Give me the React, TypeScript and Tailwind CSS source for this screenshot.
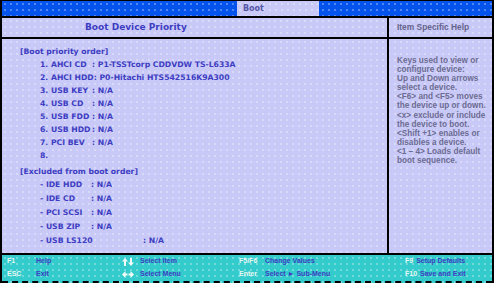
import React from 'react'

const dots =
  'bg-[image:radial-gradient(circle,#ffffffa0_0.5px,transparent_0.9px)] bg-[length:6px_6px]'

const bootOrder: [string, string][] = [
  ['1. AHCI CD', 'P1-TSSTcorp CDDVDW TS-L633A'],
  ['2. AHCI HDD', 'P0-Hitachi HTS542516K9A300'],
  ['3. USB KEY', 'N/A'],
  ['4. USB CD', 'N/A'],
  ['5. USB FDD', 'N/A'],
  ['6. USB HDD', 'N/A'],
  ['7. PCI BEV', 'N/A'],
]

const excluded: string[] = ['IDE HDD', 'IDE CD', 'PCI SCSI', 'USB ZIP']

const helpLines = [
  'Keys used to view or',
  'configure device:',
  'Up and Down arrows',
  'select a device.',
  '<F6> and <F5> moves',
  'the device up or down.',
  '<x> exclude or include',
  'the device to boot.',
  '<Shift +1> enables or',
  'disables a device.',
  '<1 – 4> Loads default',
  'boot sequence.',
]

const Key: React.FC<{ children: React.ReactNode; className?: string }> = ({ children, className = '' }) => (
  <span className={`text-[#eaf7f3] ${className}`}>{children}</span>
)

const Desc: React.FC<{ children: React.ReactNode; className?: string }> = ({ children, className = '' }) => (
  <span className={`text-[#3f3fc4] ${className}`}>{children}</span>
)

// white up/down and left/right arrows used in the legend
const UpDown = () => (
  <svg width="12" height="8" viewBox="0 0 12 8" fill="#f2fbf8">
    <path d="M3 0 L6 3.5 H4 V8 H2 V3.5 H0 Z" />
    <path d="M9 8 L12 4.5 H10 V0 H8 V4.5 H6 Z" />
  </svg>
)

const LeftRight = () => (
  <svg width="12" height="7" viewBox="0 0 12 7" fill="#f2fbf8">
    <path d="M0 3.5 L3.5 0 V2.5 H5.5 V4.5 H3.5 V7 Z" />
    <path d="M12 3.5 L8.5 0 V2.5 H6.5 V4.5 H8.5 V7 Z" />
  </svg>
)

export default function App() {
  return (
    <div className="w-[497px] h-[288px] bg-white overflow-hidden font-['DejaVu_Sans',sans-serif]">
      <div className="w-[494px] flex flex-col border-t border-x-2 border-black">
        {/* menu bar */}
        <div className={`h-[17px] flex border-b-2 border-black bg-[#0453ec] ${dots}`}>
          <div
            className={`ml-[235px] w-[82px] bg-[#c9c9f7] ${dots} pl-[6px] flex items-center text-[8px] font-bold text-[#5656a6]`}
          >
            Boot
          </div>
        </div>

        {/* header row */}
        <div className={`h-[21px] flex border-b-2 border-black bg-[#c9c9f7] ${dots}`}>
          <div className="w-[387px] border-r-2 border-black flex items-center pl-[83px] text-[9px] font-bold text-[#3d3dc2]">
            Boot Device Priority
          </div>
          <div className="flex-1 flex items-center pl-[8px] font-['Liberation_Sans',sans-serif] text-[8.4px] font-bold text-[#64648c]">
            Item Specific Help
          </div>
        </div>

        {/* content */}
        <div className={`h-[216px] flex border-b-2 border-black bg-[#c9c9f7] ${dots}`}>
          <div className="w-[387px] border-r-2 border-black pl-[18px] pt-[7px] text-[7.7px] font-bold text-[#3d3dc2] whitespace-nowrap">
            <div className="h-[12px] leading-[12px]">[Boot priority order]</div>
            <div className="pl-[20px]">
              {bootOrder.map(([label, value]) => (
                <div key={label} className="h-[13px] leading-[13px]">
                  <span className="inline-block min-w-[52px]">{label}</span>: {value}
                </div>
              ))}
              <div className="h-[13px] leading-[13px]">8.</div>
            </div>
            <div className="mt-[4px] h-[12px] leading-[12px]">[Excluded from boot order]</div>
            <div className="pl-[20px]">
              {excluded.map((label) => (
                <div key={label} className="h-[14px] leading-[14px]">
                  <span className="inline-block min-w-[51px]">- {label}</span>: N/A
                </div>
              ))}
              <div className="h-[14px] leading-[14px]">
                <span className="inline-block min-w-[103px]">- USB LS120</span>: N/A
              </div>
            </div>
          </div>
          <div className="flex-1 pl-[8px] pt-[17px] font-['Liberation_Sans',sans-serif] text-[8.2px] font-bold leading-[9.1px] text-[#6c6c92] whitespace-nowrap">
            {helpLines.map((l) => (
              <div key={l}>{l}</div>
            ))}
          </div>
        </div>

        {/* key legend */}
        <div
          className={`h-[28px] border-b-2 border-dashed border-black bg-[#33cbcb] ${dots} pl-[5px] font-['Liberation_Sans',sans-serif] text-[7px] font-bold whitespace-nowrap`}
        >
          <div className="h-[13px] flex items-center">
            <Key className="w-[29px]">F1</Key>
            <Desc className="w-[86px]">Help</Desc>
            <span className="w-[18px] flex items-center">
              <UpDown />
            </span>
            <Desc className="w-[99px]">Select Item</Desc>
            <Key className="w-[26px]">F5/F6</Key>
            <Desc className="w-[140px]">Change Values</Desc>
            <Key className="mr-[3px]">F9</Key>
            <Desc>Setup Defaults</Desc>
          </div>
          <div className="h-[13px] flex items-center">
            <Key className="w-[29px]">ESC</Key>
            <Desc className="w-[86px]">Exit</Desc>
            <span className="w-[18px] flex items-center">
              <LeftRight />
            </span>
            <Desc className="w-[99px]">Select Menu</Desc>
            <Key className="w-[26px]">Enter</Key>
            <Desc className="w-[140px]">Select ► Sub-Menu</Desc>
            <Key className="mr-[3px]">F10</Key>
            <Desc>Save and Exit</Desc>
          </div>
        </div>
      </div>
    </div>
  )
}
